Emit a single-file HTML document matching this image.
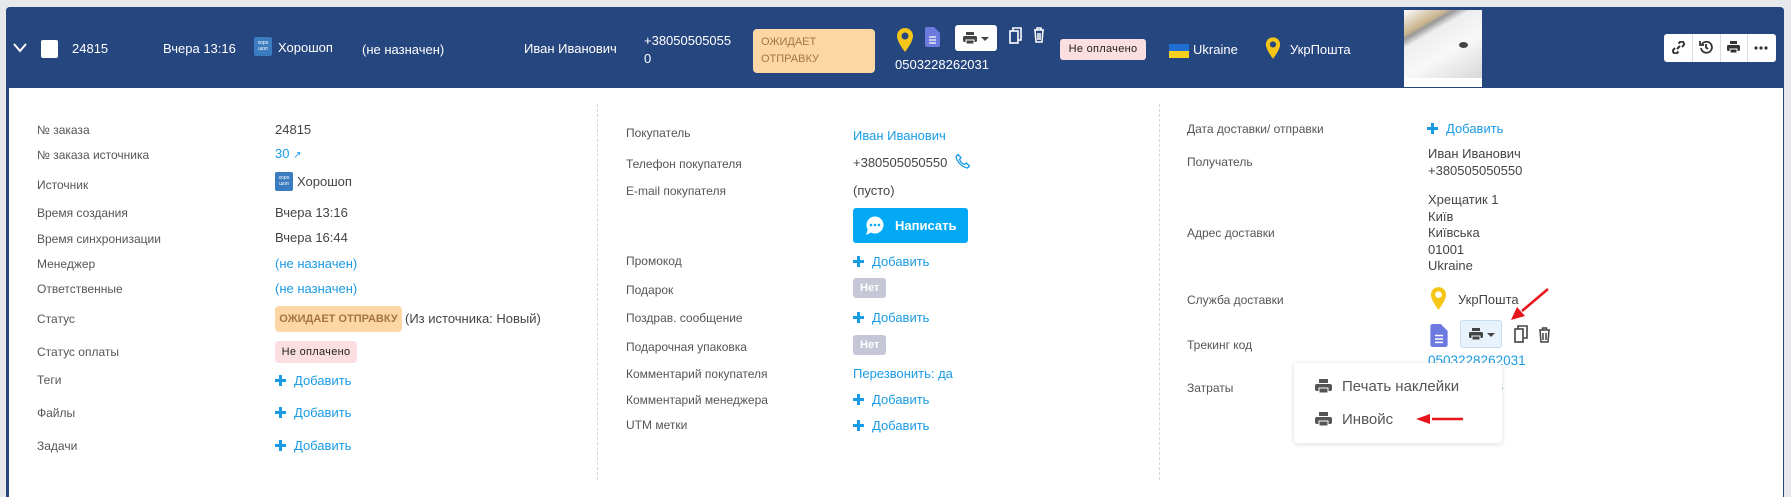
<!DOCTYPE html>
<html><head><meta charset="utf-8"><style>
*{margin:0;padding:0;box-sizing:border-box}
body{width:1791px;height:483px;background:#e6e8eb;font-family:"Liberation Sans",Arial,sans-serif;position:relative;overflow:hidden;color:#444}
.a{position:absolute;white-space:nowrap}
.card{position:absolute;left:6px;top:7px;width:1778px;height:490px;background:#fff;border-left:3px solid #26467f;border-right:1px solid #26467f;border-radius:4px 4px 0 0}
.hdr{position:absolute;left:6px;top:7px;width:1778px;height:81px;background:#26467f;border-radius:4px 4px 0 0}
.w{color:#fff;font-size:13px}
.l{font-size:12px;color:#555}
.v{font-size:13px;color:#444}
.b{font-size:13px;color:#1a9be6}
.plus{display:inline-block;width:11px;height:11px;position:relative;margin-right:8px;vertical-align:-1px}
.plus:before{content:"";position:absolute;left:4px;top:0;width:3px;height:11px;background:#1a9be6}
.plus:after{content:"";position:absolute;left:0;top:4px;width:11px;height:3px;background:#1a9be6}
.dash{position:absolute;top:104px;height:376px;border-left:1px dashed #d6d6d6}
.net{background:#c5c6d6;color:#fff;font-weight:bold;font-size:11px;padding:4px 7px;border-radius:3px}
</style></head><body>
<div class="card"></div>
<div class="hdr"></div>
<!-- header -->
<svg class="a" style="left:12px;top:42px" width="16" height="12"><path d="M2 2 L8 9 L14 2" stroke="#fff" stroke-width="2" fill="none"/></svg>
<div class="a" style="left:41px;top:40px;width:17px;height:18px;background:#fff;border-radius:2px"></div>
<div class="a w" style="left:72px;top:41px">24815</div>
<div class="a w" style="left:163px;top:41px">Вчера 13:16</div>
<div class="a" style="left:254px;top:37px;width:18px;height:19px;background:#3b7bbf;border-radius:2px;color:#fff;font-size:5px;line-height:6px;text-align:center;padding-top:3px">хоро<br>шоп</div>
<div class="a w" style="left:278px;top:40px">Хорошоп</div>
<div class="a w" style="left:362px;top:42px">(не назначен)</div>
<div class="a w" style="left:524px;top:41px">Иван Иванович</div>
<div class="a w" style="left:644px;top:32px;line-height:18px">+38050505055<br>0</div>
<div class="a" style="left:753px;top:29px;width:122px;height:44px;background:#fdd6a5;border-radius:4px;color:#a47540;font-size:11px;line-height:17px;padding:5px 8px">ОЖИДАЕТ<br>ОТПРАВКУ</div>
<svg class="a" style="left:896px;top:27px" width="18" height="26" viewBox="0 0 18 26"><path d="M9 1C4.5 1 1 4.5 1 9c0 6 8 16 8 16s8-10 8-16c0-4.5-3.5-8-8-8z" fill="#f5c518"/><circle cx="9" cy="9" r="3.5" fill="#26467f"/></svg>
<svg class="a" style="left:925px;top:27px" width="15" height="20" viewBox="0 0 15 20"><path d="M0 2a2 2 0 0 1 2-2h7l6 6v12a2 2 0 0 1-2 2H2a2 2 0 0 1-2-2z" fill="#6c7ae0"/><path d="M4 10h7M4 13h7M4 16h7" stroke="#fff" stroke-width="1.3"/></svg>
<div class="a" style="left:955px;top:25px;width:42px;height:26px;background:#fff;border-radius:3px"></div>
<svg class="a" style="left:963px;top:32px" width="28" height="13"><rect x="3" y="0" width="8" height="3" fill="#444"/><rect x="0" y="4" width="14" height="6" rx="1.5" fill="#444"/><rect x="3" y="8" width="8" height="4" fill="#444" stroke="#fff"/><path d="M18 5l4 4 4-4z" fill="#444"/></svg>
<svg class="a" style="left:1009px;top:27px" width="14" height="17" fill="none" stroke="#fff" stroke-width="1.6"><rect x="1" y="4" width="8" height="12"/><path d="M4 4V1h8v12H9"/></svg>
<svg class="a" style="left:1033px;top:27px" width="12" height="16" fill="none" stroke="#fff" stroke-width="1.5"><path d="M1 3h10M4 3V1h4v2M2 3l1 12h6l1-12M5 6v7M7 6v7"/></svg>
<div class="a w" style="left:895px;top:57px">0503228262031</div>
<div class="a" style="left:1060px;top:39px;width:86px;height:21px;background:#fbdfe0;border-radius:3px;color:#222;font-size:11px;line-height:21px;text-align:center;letter-spacing:.3px">Не оплачено</div>
<div class="a" style="left:1169px;top:44px;width:20px;height:7px;background:#1e6fd1"></div>
<div class="a" style="left:1169px;top:51px;width:20px;height:7px;background:#f8d020"></div>
<div class="a w" style="left:1193px;top:42px">Ukraine</div>
<svg class="a" style="left:1265px;top:36px" width="16" height="24" viewBox="0 0 18 26"><path d="M9 1C4.5 1 1 4.5 1 9c0 6 8 16 8 16s8-10 8-16c0-4.5-3.5-8-8-8z" fill="#f5c518"/><circle cx="9" cy="9" r="3.5" fill="#26467f"/></svg>
<div class="a w" style="left:1290px;top:42px">УкрПошта</div>
<div class="a" style="left:1404px;top:10px;width:78px;height:77px;background:#fff"></div>
<div class="a" style="left:1404px;top:10px;width:78px;height:68px;background:linear-gradient(150deg,#fff 0%,#c9b48d 22%,#999 26%,#eee 34%,#f8f8f8 60%,#d8d8d8 100%)"></div>
<div class="a" style="left:1459px;top:42px;width:9px;height:6px;background:#444;border-radius:50%"></div>
<div class="a" style="left:1664px;top:34px;width:112px;height:28px;background:#fff;border-radius:3px"></div>
<div class="a" style="left:1692px;top:34px;width:1px;height:28px;background:#ddd"></div>
<div class="a" style="left:1720px;top:34px;width:1px;height:28px;background:#ddd"></div>
<div class="a" style="left:1747px;top:34px;width:1px;height:28px;background:#ddd"></div>
<svg class="a" style="left:1672px;top:41px" width="13" height="13" fill="none" stroke="#333" stroke-width="2"><path d="M5 8l3-3M3 7L1.5 8.5a2.5 2.5 0 0 0 3.5 3.5L6.5 10.5M10 6l1.5-1.5A2.5 2.5 0 0 0 8 1L6.5 2.5"/></svg>
<svg class="a" style="left:1699px;top:40px" width="14" height="14" fill="none" stroke="#333" stroke-width="1.8"><path d="M3 4a5.5 5.5 0 1 1-1 4M1 1v4h4M7 4v3.5l2 1.5"/></svg>
<svg class="a" style="left:1727px;top:41px" width="13" height="13"><rect x="3" y="0" width="7" height="3" fill="#333"/><rect x="0" y="4" width="13" height="6" rx="1.5" fill="#333"/><rect x="3" y="8" width="7" height="4" fill="#333" stroke="#fff"/></svg>
<svg class="a" style="left:1754px;top:46px" width="14" height="4" fill="#333"><circle cx="2" cy="2" r="1.6"/><circle cx="7" cy="2" r="1.6"/><circle cx="12" cy="2" r="1.6"/></svg>

<!-- dividers -->
<div class="dash" style="left:597px"></div>
<div class="dash" style="left:1159px"></div>

<!-- col1 -->
<div class="a l" style="left:37px;top:123px">№ заказа</div><div class="a v" style="left:275px;top:122px">24815</div>
<div class="a l" style="left:37px;top:148px">№ заказа источника</div><div class="a b" style="left:275px;top:146px">30 <span style="font-size:10px">↗</span></div>
<div class="a l" style="left:37px;top:178px">Источник</div>
<div class="a" style="left:275px;top:172px;width:18px;height:19px;background:#3b7bbf;border-radius:2px;color:#fff;font-size:5px;line-height:6px;text-align:center;padding-top:3px">хоро<br>шоп</div>
<div class="a v" style="left:297px;top:174px">Хорошоп</div>
<div class="a l" style="left:37px;top:206px">Время создания</div><div class="a v" style="left:275px;top:205px">Вчера 13:16</div>
<div class="a l" style="left:37px;top:232px">Время синхронизации</div><div class="a v" style="left:275px;top:230px">Вчера 16:44</div>
<div class="a l" style="left:37px;top:257px">Менеджер</div><div class="a b" style="left:275px;top:256px">(не назначен)</div>
<div class="a l" style="left:37px;top:282px">Ответственные</div><div class="a b" style="left:275px;top:281px">(не назначен)</div>
<div class="a l" style="left:37px;top:312px">Статус</div>
<div class="a" style="left:275px;top:306px;width:127px;height:26px;background:#fdd6a5;border-radius:4px;color:#a47540;font-size:11px;font-weight:bold;line-height:26px;text-align:center">ОЖИДАЕТ ОТПРАВКУ</div>
<div class="a v" style="left:405px;top:311px">(Из источника: Новый)</div>
<div class="a l" style="left:37px;top:345px">Статус оплаты</div>
<div class="a" style="left:275px;top:341px;width:82px;height:22px;background:#fbdfe0;border-radius:3px;color:#222;font-size:11px;line-height:22px;text-align:center;letter-spacing:.3px">Не оплачено</div>
<div class="a l" style="left:37px;top:373px">Теги</div><div class="a b" style="left:275px;top:373px"><span class="plus"></span>Добавить</div>
<div class="a l" style="left:37px;top:406px">Файлы</div><div class="a b" style="left:275px;top:405px"><span class="plus"></span>Добавить</div>
<div class="a l" style="left:37px;top:439px">Задачи</div><div class="a b" style="left:275px;top:438px"><span class="plus"></span>Добавить</div>

<!-- col2 -->
<div class="a l" style="left:626px;top:126px">Покупатель</div><div class="a b" style="left:853px;top:128px">Иван Иванович</div>
<div class="a l" style="left:626px;top:157px">Телефон покупателя</div><div class="a v" style="left:853px;top:155px">+380505050550</div>
<svg class="a" style="left:955px;top:153px" width="16" height="16" fill="none" stroke="#1a9be6" stroke-width="1.3"><path d="M3 1.5l3 3-1.5 2a9 9 0 0 0 5 5l2-1.5 3 3-2 2C7 14 2 9 1 3.5z"/></svg>
<div class="a l" style="left:626px;top:184px">E-mail покупателя</div><div class="a v" style="left:853px;top:183px">(пусто)</div>
<div class="a" style="left:853px;top:208px;width:115px;height:35px;background:#03a9f4;border-radius:3px;color:#fff;font-size:13px;font-weight:bold;line-height:35px;padding-left:42px">Написать</div>
<svg class="a" style="left:864px;top:215px" width="22" height="22"><circle cx="11" cy="10" r="8.5" fill="#fff"/><path d="M4 14l-2 6 6-3z" fill="#fff"/><circle cx="7" cy="10" r="1.3" fill="#03a9f4"/><circle cx="11" cy="10" r="1.3" fill="#03a9f4"/><circle cx="15" cy="10" r="1.3" fill="#03a9f4"/></svg>
<div class="a l" style="left:626px;top:254px">Промокод</div><div class="a b" style="left:853px;top:254px"><span class="plus"></span>Добавить</div>
<div class="a l" style="left:626px;top:283px">Подарок</div><div class="a net" style="left:853px;top:278px">Нет</div>
<div class="a l" style="left:626px;top:311px">Поздрав. сообщение</div><div class="a b" style="left:853px;top:310px"><span class="plus"></span>Добавить</div>
<div class="a l" style="left:626px;top:340px">Подарочная упаковка</div><div class="a net" style="left:853px;top:335px">Нет</div>
<div class="a l" style="left:626px;top:367px">Комментарий покупателя</div><div class="a b" style="left:853px;top:366px">Перезвонить: да</div>
<div class="a l" style="left:626px;top:393px">Комментарий менеджера</div><div class="a b" style="left:853px;top:392px"><span class="plus"></span>Добавить</div>
<div class="a l" style="left:626px;top:418px">UTM метки</div><div class="a b" style="left:853px;top:418px"><span class="plus"></span>Добавить</div>

<!-- col3 -->
<div class="a l" style="left:1187px;top:122px">Дата доставки/ отправки</div><div class="a b" style="left:1427px;top:121px"><span class="plus"></span>Добавить</div>
<div class="a l" style="left:1187px;top:155px">Получатель</div><div class="a v" style="left:1428px;top:145px;line-height:17px">Иван Иванович<br>+380505050550</div>
<div class="a l" style="left:1187px;top:226px">Адрес доставки</div><div class="a v" style="left:1428px;top:192px;line-height:16.5px">Хрещатик 1<br>Київ<br>Київська<br>01001<br>Ukraine</div>
<div class="a l" style="left:1187px;top:293px">Служба доставки</div>
<svg class="a" style="left:1430px;top:286px" width="17" height="25" viewBox="0 0 18 26"><path d="M9 1C4.5 1 1 4.5 1 9c0 6 8 16 8 16s8-10 8-16c0-4.5-3.5-8-8-8z" fill="#f5c518"/><circle cx="9" cy="9" r="3.5" fill="#fff"/></svg>
<div class="a v" style="left:1458px;top:292px">УкрПошта</div>
<div class="a l" style="left:1187px;top:338px">Трекинг код</div>
<svg class="a" style="left:1430px;top:324px" width="18" height="23" viewBox="0 0 15 20"><path d="M0 2a2 2 0 0 1 2-2h7l6 6v12a2 2 0 0 1-2 2H2a2 2 0 0 1-2-2z" fill="#6c7ae0"/><path d="M4 10h7M4 13h7M4 16h7" stroke="#fff" stroke-width="1.3"/></svg>
<div class="a" style="left:1460px;top:320px;width:42px;height:28px;background:#e8f2fc;border:1px solid #c6dcf2;border-radius:3px"></div>
<svg class="a" style="left:1469px;top:328px" width="28" height="13"><rect x="3" y="0" width="8" height="3" fill="#444"/><rect x="0" y="4" width="14" height="6" rx="1.5" fill="#444"/><rect x="3" y="8" width="8" height="4" fill="#444" stroke="#e8f2fc"/><path d="M18 5l4 4 4-4z" fill="#444"/></svg>
<svg class="a" style="left:1514px;top:325px" width="15" height="18" fill="none" stroke="#444" stroke-width="1.6"><rect x="1" y="4" width="8" height="13"/><path d="M4 4V1h9v12H9"/></svg>
<svg class="a" style="left:1538px;top:327px" width="13" height="16" fill="none" stroke="#444" stroke-width="1.5"><path d="M1 3h11M4.5 3V1h4v2M2 3l1 12h7l1-12M5 6v7M8 6v7"/></svg>
<div class="a b" style="left:1428px;top:353px;font-size:13.5px">0503228262031</div>
<div class="a l" style="left:1187px;top:381px">Затраты</div>
<div class="a b" style="left:1496px;top:380px">»</div>

<!-- dropdown -->
<div class="a" style="left:1294px;top:363px;width:208px;height:80px;background:#fff;border-radius:4px;box-shadow:0 1px 6px rgba(0,0,0,.15)"></div>
<svg class="a" style="left:1315px;top:379px" width="17" height="15"><rect x="4" y="0" width="9" height="4" fill="#555"/><rect x="0" y="5" width="17" height="7" rx="2" fill="#555"/><rect x="4" y="9" width="9" height="5" fill="#555" stroke="#fff"/></svg>
<div class="a" style="left:1342px;top:378px;font-size:15px;color:#555">Печать наклейки</div>
<svg class="a" style="left:1315px;top:412px" width="17" height="15"><rect x="4" y="0" width="9" height="4" fill="#555"/><rect x="0" y="5" width="17" height="7" rx="2" fill="#555"/><rect x="4" y="9" width="9" height="5" fill="#555" stroke="#fff"/></svg>
<div class="a" style="left:1342px;top:411px;font-size:15px;color:#555">Инвойс</div>

<!-- arrows -->
<svg class="a" style="left:0;top:0" width="1791" height="483">
<path d="M1548 289L1522 311" stroke="#e8141b" stroke-width="2.5"/><path d="M1511 320l6-13 8 9z" fill="#e8141b"/>
<path d="M1463 419H1432" stroke="#e8141b" stroke-width="2.5"/><path d="M1416 419l14-5v10z" fill="#e8141b"/>
</svg>
</body></html>
